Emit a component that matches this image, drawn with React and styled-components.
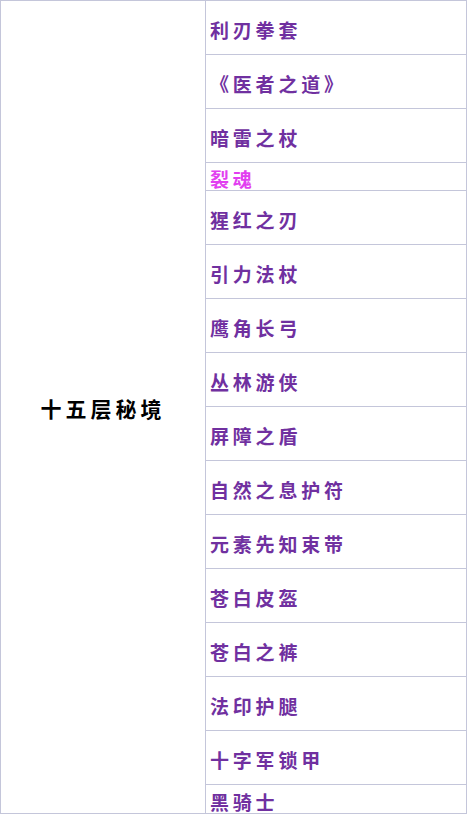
import React from "react";
import styled, { createGlobalStyle } from "styled-components";

const Global = createGlobalStyle`
  html, body { margin: 0; padding: 0; background: #fff; }
  body { font-family: "Noto Sans CJK SC", "Noto Sans", sans-serif; }
`;

const Table = styled.div`
  box-sizing: border-box;
  width: 467px;
  display: grid;
  grid-template-columns: 205px 1fr;
  border: 1px solid #c4c6da;
`;

const Group = styled.div`
  grid-row: 1 / span ${(p) => p.$rows};
  display: flex;
  align-items: center;
  justify-content: center;
  padding-top: 2px;
  border-right: 1px solid #c4c6da;
  font-size: 21px;
  font-weight: 700;
  letter-spacing: 4px;
  color: #000;
`;

const Cell = styled.div`
  grid-column: 2;
  box-sizing: border-box;
  height: ${(p) => (p.$short ? 28 : 54)}px;
  display: flex;
  align-items: center;
  padding: 4px 0 0 4px;
  border-bottom: ${(p) => (p.$last ? "none" : "1px solid #c4c6da")};
  font-size: 19px;
  font-weight: 700;
  letter-spacing: 3.8px;
  color: ${(p) => (p.$pink ? "#e23ff0" : "#7030a0")};
  white-space: nowrap;
  overflow: visible;
  line-height: 1;
`;

const items = [
  { t: "利刃拳套" },
  { t: "《医者之道》" },
  { t: "暗雷之杖" },
  { t: "裂魂", short: true, pink: true },
  { t: "猩红之刃" },
  { t: "引力法杖" },
  { t: "鹰角长弓" },
  { t: "丛林游侠" },
  { t: "屏障之盾" },
  { t: "自然之息护符" },
  { t: "元素先知束带" },
  { t: "苍白皮盔" },
  { t: "苍白之裤" },
  { t: "法印护腿" },
  { t: "十字军锁甲" },
  { t: "黑骑士", short: true },
];

export default function App() {
  return (
    <>
      <Global />
      <Table>
        <Group $rows={items.length}>十五层秘境</Group>
        {items.map((it, i) => (
          <Cell
            key={i}
            $short={it.short}
            $pink={it.pink}
            $last={i === items.length - 1}
          >
            {it.t}
          </Cell>
        ))}
      </Table>
    </>
  );
}
